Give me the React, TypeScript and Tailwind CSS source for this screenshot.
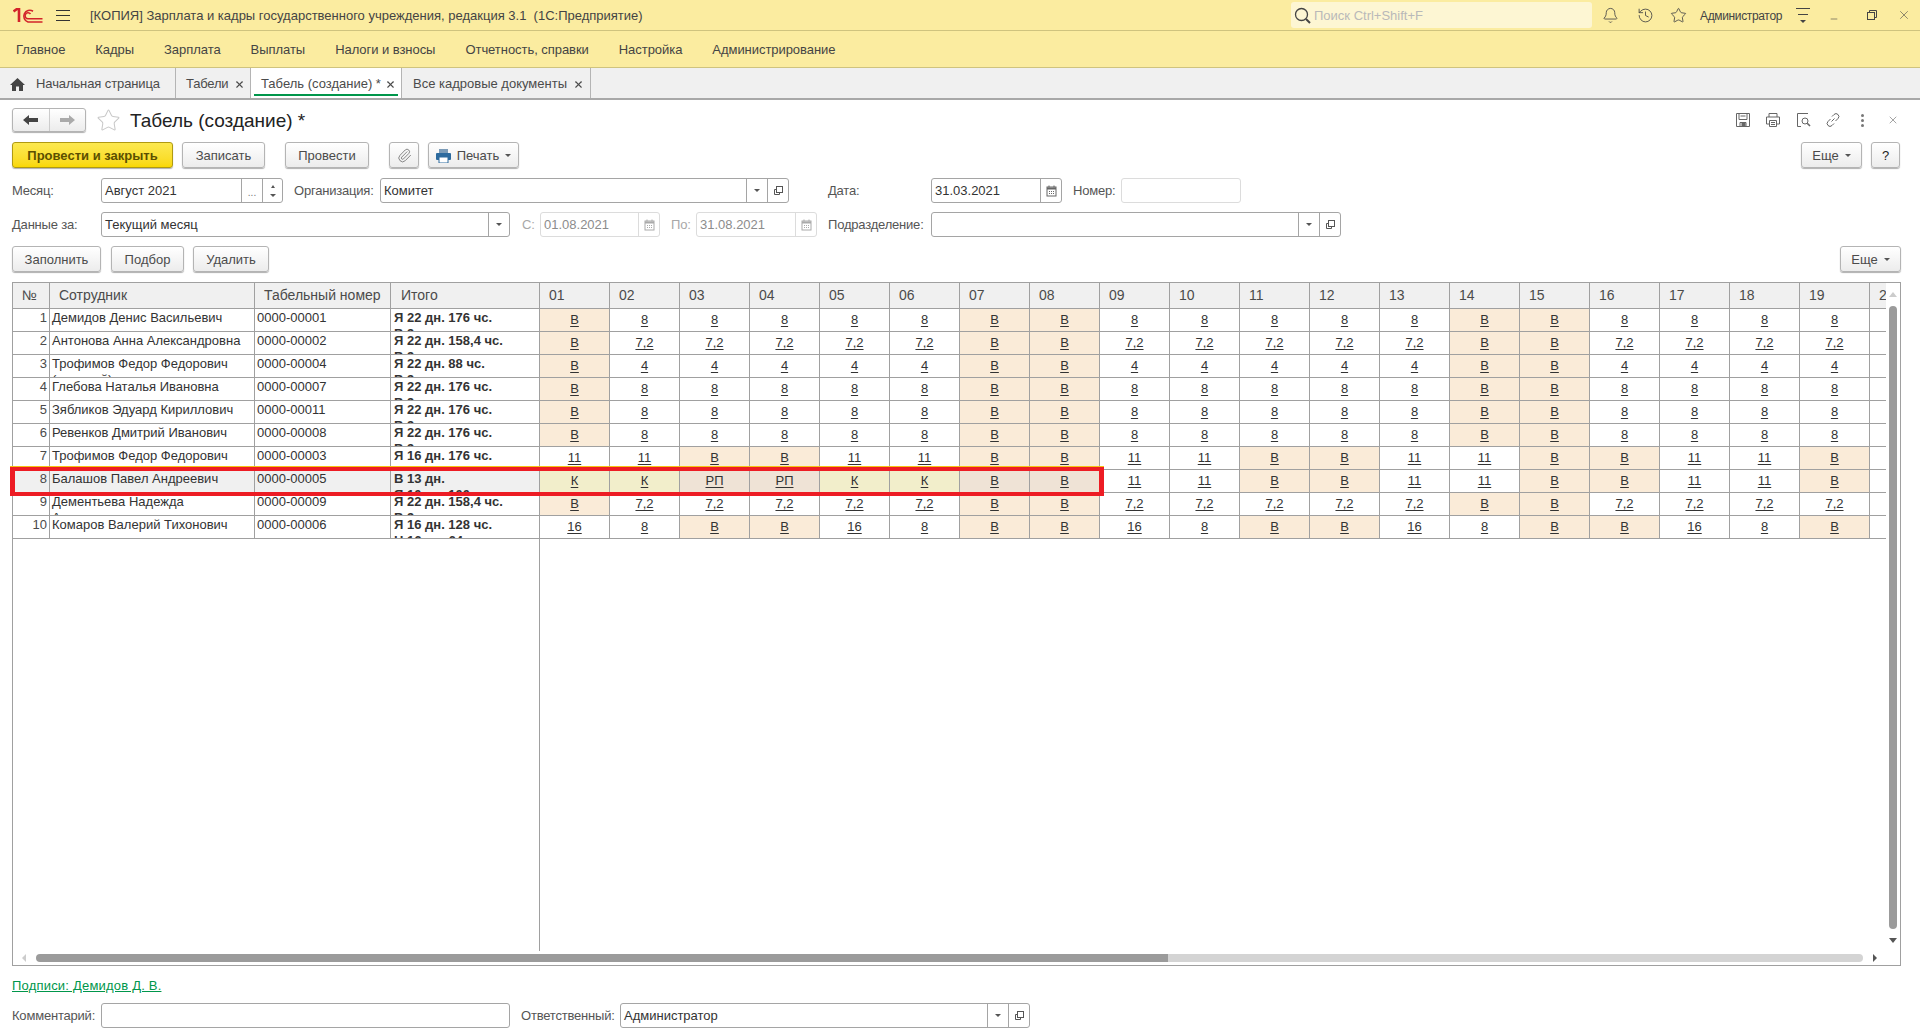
import { Bell, History, Star, X, Paperclip, Minus } from 'lucide-react';
import type { ReactNode } from 'react';

const menuItems = ['Главное', 'Кадры', 'Зарплата', 'Выплаты', 'Налоги и взносы', 'Отчетность, справки', 'Настройка', 'Администрирование'];

const dayHeaders = ['01', '02', '03', '04', '05', '06', '07', '08', '09', '10', '11', '12', '13', '14', '15', '16', '17', '18', '19'];

// 5/2 and 2/2 schedules as they appear in the grid
const fiveTwo = (v: string) => ['В', v, v, v, v, v, v, 'В', 'В', v, v, v, v, v, 'В', 'В', v, v, v, v].filter((_, i) => i !== 1);
const shift = ['11', '11', 'В', 'В', '11', '11', 'В', 'В', '11', '11', 'В', 'В', '11', '11', 'В', 'В', '11', '11', 'В'];

interface Row {
  n: number;
  name: string;
  name2?: string;
  tab: string;
  total: string;
  total2: string;
  days: string[];
  current?: boolean;
}

const rows: Row[] = [
  { n: 1, name: 'Демидов Денис Васильевич', tab: '0000-00001', total: 'Я 22 дн. 176 чс.', total2: 'В 9 дн.', days: fiveTwo('8') },
  { n: 2, name: 'Антонова Анна Александровна', tab: '0000-00002', total: 'Я 22 дн. 158,4 чс.', total2: 'В 9 дн.', days: fiveTwo('7,2') },
  { n: 3, name: 'Трофимов Федор Федорович', name2: '(старший)', tab: '0000-00004', total: 'Я 22 дн. 88 чс.', total2: 'В 9 дн.', days: fiveTwo('4') },
  { n: 4, name: 'Глебова Наталья Ивановна', tab: '0000-00007', total: 'Я 22 дн. 176 чс.', total2: 'В 9 дн.', days: fiveTwo('8') },
  { n: 5, name: 'Зябликов Эдуард Кириллович', tab: '0000-00011', total: 'Я 22 дн. 176 чс.', total2: 'В 9 дн.', days: fiveTwo('8') },
  { n: 6, name: 'Ревенков Дмитрий Иванович', tab: '0000-00008', total: 'Я 22 дн. 176 чс.', total2: 'В 9 дн.', days: fiveTwo('8') },
  { n: 7, name: 'Трофимов Федор Федорович', tab: '0000-00003', total: 'Я 16 дн. 176 чс.', total2: 'В 15 дн.', days: shift },
  { n: 8, name: 'Балашов Павел Андреевич', tab: '0000-00005', total: 'В 13 дн.', total2: 'Я 10 дн. 100 чс.', days: ['К', 'К', 'РП', 'РП', 'К', 'К', 'В', 'В', '11', '11', 'В', 'В', '11', '11', 'В', 'В', '11', '11', 'В'], current: true },
  { n: 9, name: 'Дементьева Надежда', name2: 'Андреевна', tab: '0000-00009', total: 'Я 22 дн. 158,4 чс.', total2: 'В 9 дн.', days: fiveTwo('7,2') },
  { n: 10, name: 'Комаров Валерий Тихонович', tab: '0000-00006', total: 'Я 16 дн. 128 чс.', total2: 'Н 16 дн. 64 чс.', days: ['16', '8', 'В', 'В', '16', '8', 'В', 'В', '16', '8', 'В', 'В', '16', '8', 'В', 'В', '16', '8', 'В'] },
];

const Btn = ({ children, className = '' }: { children: ReactNode; className?: string }) => (
  <button className={`h-[26px] pt-px flex items-center justify-center rounded-[3px] border border-[#b4b4b4] bg-gradient-to-b from-white to-[#ececec] shadow-[0_1px_1px_#b0b0b0] text-[13px] text-[#4b4b4b] ${className}`}>
    {children}
  </button>
);

const Caret = ({ light = false }: { light?: boolean }) => (
  <span className={`inline-block w-0 h-0 border-x-[3px] border-x-transparent border-t-[3px] ${light ? 'border-t-[#999]' : 'border-t-[#555]'}`} />
);

const OpenIcon = () => (
  <svg width="11" height="11" viewBox="0 0 11 11" fill="none" stroke="#555" strokeWidth="1">
    <rect x="3.5" y="1.5" width="6" height="6" />
    <path d="M3.5 4.5h-2v5h5v-2" />
  </svg>
);

const Calendar = ({ light = false }: { light?: boolean }) => (
  <svg width="11" height="12" viewBox="0 0 11 12" fill="none" stroke={light ? '#aaa' : '#666'}>
    <rect x="1" y="2" width="9" height="9" />
    <path d="M1 3.5h9" strokeWidth="2" />
    <path d="M3 0.5v2M8 0.5v2M3 6.5h1M5 6.5h1M7 6.5h1M3 8.5h1M5 8.5h1M7 8.5h1" />
  </svg>
);

const Part = ({ children, w = 21 }: { children: ReactNode; w?: number }) => (
  <span className={`flex h-full items-center justify-center border-l border-inherit shrink-0 ${w === 21 ? 'w-[21px]' : 'w-[20px]'}`}>{children}</span>
);

const Input = ({ w, value, disabled = false, children, h = 'h-[25px]' }: { w: string; value?: string; disabled?: boolean; children?: ReactNode; h?: string }) => (
  <div className={`${w} ${h} shrink-0 flex items-center rounded-[3px] border ${disabled ? 'border-[#dcdcdc] text-[#8c8c8c]' : 'border-[#a5a5a5] text-[#333]'} bg-white text-[13px]`}>
    <span className="flex-1 pl-[3px] overflow-hidden whitespace-nowrap">{value}</span>
    {children}
  </div>
);

const Label = ({ w, ml = '', children, muted = false }: { w: string; ml?: string; children: ReactNode; muted?: boolean }) => (
  <span className={`${w} ${ml} shrink-0 text-[13px] tracking-[-0.2px] whitespace-nowrap ${muted ? 'text-[#a8a8a8]' : 'text-[#555]'}`}>{children}</span>
);

const DayCell = ({ value, current, index }: { value: string; current?: boolean; index: number }) => {
  const off = value === 'В' || value === 'РП';
  let bg = off ? 'bg-[#faebd8]' : 'bg-white';
  if (current && index < 8) bg = off ? 'bg-[#efe3d6]' : 'bg-[#f2eecb]';
  return (
    <div className={`w-[70px] shrink-0 h-full border-r border-[#a0a0a0] text-center pt-[3px] leading-[16px] text-[13px] text-[#333] ${bg}`}>
      <span className="underline underline-offset-2">{value}</span>
    </div>
  );
};

const Table = () => (
  <div className="relative h-[684px] ml-3 mr-[19px] mt-[10px] border border-[#a0a0a0] flex flex-col">
    <div className="flex-1 flex min-h-0">
      <div className="flex-1 min-w-0 overflow-hidden flex flex-col">
        <div className="flex h-[26px] shrink-0 bg-[#f0f0f0] border-b border-[#a0a0a0] text-[14px] text-[#4b4b4b] leading-[25px]">
          <div className="w-[37px] shrink-0 border-r border-[#a0a0a0] pl-[9px]">№</div>
          <div className="w-[205px] shrink-0 border-r border-[#a0a0a0] pl-[9px]">Сотрудник</div>
          <div className="w-[136px] shrink-0 border-r border-[#a0a0a0] pl-[9px] whitespace-nowrap">Табельный номер</div>
          <div className="w-[149px] shrink-0 border-r border-[#a0a0a0] pl-[10px]">Итого</div>
          {dayHeaders.map((d) => (
            <div key={d} className="w-[70px] shrink-0 border-r border-[#a0a0a0] pl-[9px]">{d}</div>
          ))}
          <div className="w-[70px] shrink-0 pl-[9px]">20</div>
        </div>
        {rows.map((r) => (
          <div key={r.n} className="flex h-[23px] shrink-0 border-b border-[#a0a0a0] overflow-hidden bg-white">
            <div className={`w-[37px] shrink-0 h-full border-r border-[#a0a0a0] text-right pr-[2px] pt-px leading-[16px] text-[13px] text-[#4b4b4b] ${r.current ? 'bg-[#f0f0f0]' : ''}`}>{r.n}</div>
            <div className={`w-[205px] shrink-0 h-full border-r border-[#a0a0a0] pl-[2px] pt-px leading-[16px] text-[13px] text-[#333] whitespace-nowrap ${r.current ? 'bg-[#f0f0f0]' : ''}`}>
              <div>{r.name}</div>
              {r.name2 && <div>{r.name2}</div>}
            </div>
            <div className={`w-[136px] shrink-0 h-full border-r border-[#a0a0a0] pl-[2px] pt-px leading-[16px] text-[13px] text-[#333] ${r.current ? 'bg-[#f0f0f0]' : ''}`}>{r.tab}</div>
            <div className={`w-[149px] shrink-0 h-full border-r border-[#a0a0a0] pl-[3px] pt-px leading-[16px] text-[13px] font-bold text-[#333] whitespace-nowrap ${r.current ? 'bg-[#f0f0f0]' : ''}`}>
              <div>{r.total}</div>
              <div>{r.total2}</div>
            </div>
            {r.days.map((d, i) => (
              <DayCell key={i} value={d} current={r.current} index={i} />
            ))}
            <div className="w-[70px] shrink-0 h-full" />
          </div>
        ))}
        <div className="flex-1 flex">
          <div className="w-[527px] shrink-0 border-r border-[#a0a0a0]" />
        </div>
      </div>
      {/* vertical scrollbar */}
      <div className="w-[14px] shrink-0 flex flex-col items-center">
        <div className="h-[23px] shrink-0 flex items-center">
          <span className="w-0 h-0 border-x-[4px] border-x-transparent border-b-[5px] border-b-[#ccc]" />
        </div>
        <div className="flex-1 w-[8px] rounded-full bg-[#9b9b9b]" />
        <div className="h-[22px] shrink-0 flex items-center">
          <span className="w-0 h-0 border-x-[4px] border-x-transparent border-t-[5px] border-t-[#555]" />
        </div>
      </div>
    </div>
    {/* horizontal scrollbar */}
    <div className="h-[14px] shrink-0 flex items-center">
      <span className="ml-[9px] mr-[10px] w-0 h-0 border-y-[4px] border-y-transparent border-r-[4px] border-r-[#ccc]" />
      <div className="h-[8px] w-[1132px] rounded-l-full bg-[#9b9b9b]" />
      <div className="h-[8px] w-[695px] rounded-r-full bg-[#d4d4d4]" />
      <span className="ml-[10px] w-0 h-0 border-y-[4px] border-y-transparent border-l-[4px] border-l-[#555]" />
    </div>
    {/* red marker drawn over the current row */}
    <div className="absolute left-[-3px] top-[184px] w-[1094px] h-[29px] border-x-[5px] border-y-[4px] border-[#ed1c24] shadow-[0_-1px_0_#f5c211]" />
  </div>
);

export default function App() {
  return (
    <div className="h-[1035px] w-[1920px] overflow-hidden bg-white flex flex-col font-['Liberation_Sans',Arial,sans-serif] text-[13px] text-[#4b4b4b]">
      {/* title bar */}
      <header className="h-[31px] shrink-0 bg-[#fbeca0] border-b border-[#cfc37e] flex items-center">
        <svg className="ml-[13px] shrink-0" width="30" height="15" viewBox="0 0 30 15" fill="none" stroke="#d2232a">
          <path d="M0.5 3.5 L4 1 L6 1 L6 14" strokeWidth="2.6" />
          <path d="M20 3.2 A6 6 0 1 0 15 14 H29.5" strokeWidth="1.6" />
          <path d="M17.5 6 A3 3 0 1 0 15 10.8 H29.5" strokeWidth="1.6" />
        </svg>
        <div className="ml-[13px] w-[14px] h-[11px] flex flex-col justify-between shrink-0">
          <span className="h-px bg-[#333]" />
          <span className="h-px bg-[#333]" />
          <span className="h-px bg-[#333]" />
        </div>
        <span className="ml-[20px] pt-[2px] whitespace-pre text-[#444]">[КОПИЯ] Зарплата и кадры государственного учреждения, редакция 3.1  (1С:Предприятие)</span>
        <div className="ml-auto w-[301px] h-[26px] rounded-[3px] bg-[#fdf6d3] flex items-center shrink-0">
          <svg className="ml-[3px]" width="17" height="17" viewBox="0 0 17 17" fill="none" stroke="#444" strokeWidth="1.3">
            <circle cx="7.5" cy="7.5" r="6" />
            <path d="M12 12l4 4" strokeWidth="2" />
          </svg>
          <span className="ml-[3px] pt-[2px] text-[#b9b9b9]">Поиск Ctrl+Shift+F</span>
        </div>
        <Bell className="ml-[10px] shrink-0 text-[#444]" size={17} strokeWidth={1.2} />
        <History className="ml-[18px] shrink-0 text-[#444]" size={17} strokeWidth={1.2} />
        <Star className="ml-[16px] shrink-0 text-[#444]" size={17} strokeWidth={1.2} />
        <span className="ml-[13px] pt-[2px] w-[89px] shrink-0 text-[12px] tracking-[-0.35px] text-[#444] whitespace-nowrap">Администратор</span>
        <div className="ml-[7px] w-[14px] shrink-0 flex flex-col items-center gap-[5px]">
          <span className="h-px w-[14px] bg-[#444]" />
          <span className="h-px w-[10px] bg-[#444]" />
          <span className="w-0 h-0 border-x-[3px] border-x-transparent border-t-[3px] border-t-[#444]" />
        </div>
        <Minus className="ml-[19px] mt-[8px] shrink-0 text-[#444]" size={10} strokeWidth={1.4} />
        <svg className="ml-[28px] shrink-0" width="10" height="10" viewBox="0 0 10 10" fill="none" stroke="#444">
          <rect x="0.5" y="2.5" width="7" height="7" />
          <path d="M2.5 2.5v-2h7v7h-2" />
        </svg>
        <X className="ml-[20px] mr-[9px] shrink-0 text-[#444]" size={14} strokeWidth={1} />
      </header>

      {/* section menu */}
      <nav className="h-[37px] pt-[2px] shrink-0 bg-[#fbeca0] border-b border-[#cfc37e] flex items-center pl-[16px] gap-[30px] tracking-[-0.05px] text-[#444]">
        {menuItems.map((m) => (
          <span key={m}>{m}</span>
        ))}
      </nav>

      {/* open windows */}
      <div className="h-[32px] shrink-0 bg-[#f0f0f0] border-b-2 border-[#a8a8a8] flex">
        <div className="w-[176px] pt-[2px] border-r border-[#b4b4b4] flex items-center pl-[10px]">
          <svg width="15" height="13" viewBox="0 0 15 13" fill="#444">
            <path d="M7.5 0 L15 7 H13 V13 H9 V8.5 H6 V13 H2 V7 H0 Z" />
          </svg>
          <span className="ml-[11px] tracking-[-0.1px]">Начальная страница</span>
        </div>
        <div className="w-[75px] pt-[2px] border-r border-[#b4b4b4] flex items-center pl-[10px]">
          <span className="tracking-[-0.2px]">Табели</span>
          <X className="ml-[6px]" size={11} strokeWidth={2.4} />
        </div>
        <div className="relative w-[151px] pt-[2px] border-r border-[#b4b4b4] bg-white flex items-center pl-[10px]">
          <span className="whitespace-nowrap">Табель (создание) *</span>
          <X className="ml-[4px] shrink-0" size={11} strokeWidth={2.4} />
          <span className="absolute left-[3px] right-[3px] bottom-[2px] h-[2px] bg-[#00964b]" />
        </div>
        <div className="w-[189px] pt-[2px] border-r border-[#b4b4b4] flex items-center pl-[11px]">
          <span className="whitespace-nowrap">Все кадровые документы</span>
          <X className="ml-[6px] shrink-0" size={11} strokeWidth={2.4} />
        </div>
      </div>

      {/* form title */}
      <div className="h-[24px] mt-2 shrink-0 flex items-center pl-3 pr-[21px]">
        <div className="w-[74px] h-[24px] flex rounded-[3px] border border-[#b4b4b4] bg-gradient-to-b from-white to-[#ececec] shadow-[0_1px_1px_#b0b0b0]">
          <span className="flex-1 flex items-center justify-center border-r border-[#ccc]">
            <svg width="15" height="10" viewBox="0 0 15 10" fill="#444"><path d="M0 5 L6 0 V3 H15 V7 H6 V10 Z" /></svg>
          </span>
          <span className="flex-1 flex items-center justify-center">
            <svg width="15" height="10" viewBox="0 0 15 10" fill="#aaa"><path d="M15 5 L9 0 V3 H0 V7 H9 V10 Z" /></svg>
          </span>
        </div>
        <Star className="ml-[10px] text-[#c8c8c8]" size={25} strokeWidth={1} />
        <span className="ml-[9px] pt-[2px] text-[19px] text-[#222] whitespace-nowrap">Табель (создание) *</span>
        <div className="ml-auto flex items-center text-[#666]">
          <svg width="16" height="16" viewBox="0 0 16 16" fill="none" stroke="#666">
            <path d="M1.5 1.5h13v13h-13z" />
            <path d="M4 1.500v6h8v-6M5.500 4h5M5 14.500v-4h6v4" />
            <rect x="7" y="11.500" width="3" height="3" fill="#666" />
          </svg>
          <svg className="ml-[14px]" width="16" height="16" viewBox="0 0 16 16" fill="none" stroke="#666">
            <path d="M4 5V1.500h8V5M4 12H1.500V5h13v7H12" />
            <path d="M4.500 8.500h7v6h-7zM6 10.500h4M6 12.500h4" />
          </svg>
          <svg className="ml-[14px]" width="16" height="16" viewBox="0 0 16 16" fill="none" stroke="#666">
            <path d="M13 1.500H2.500v13H6" />
            <circle cx="10" cy="9" r="3" />
            <path d="M12.200 11.200l2.800 2.800" strokeWidth="1.600" />
          </svg>
          <svg className="ml-[14px]" width="16" height="16" viewBox="0 0 16 16" fill="none" stroke="#666">
            <path d="M6.500 9.500l3-3M7 4.500l2-2a2.800 2.800 0 0 1 4 4l-2.500 2.500M9 11.500l-2 2a2.800 2.800 0 0 1-4-4l2.500-2.500" />
          </svg>
          <span className="ml-[20px] flex flex-col gap-[2px]">
            <span className="w-[3px] h-[3px] bg-[#777] rounded-full" />
            <span className="w-[3px] h-[3px] bg-[#777] rounded-full" />
            <span className="w-[3px] h-[3px] bg-[#777] rounded-full" />
          </span>
          <X className="ml-[23px]" size={12} strokeWidth={1.2} />
        </div>
      </div>

      {/* command bar */}
      <div className="mt-[10px] shrink-0 flex items-center pl-3 pr-[20px]">
        <button className="w-[161px] h-[26px] pt-px rounded-[3px] border border-[#b09a12] bg-gradient-to-b from-[#fce94f] to-[#f9d800] shadow-[0_1px_1px_#b0b0b0] text-[13px] font-bold text-[#5c4f00]">
          Провести и закрыть
        </button>
        <Btn className="ml-[9px] w-[83px]">Записать</Btn>
        <Btn className="ml-[20px] w-[84px]">Провести</Btn>
        <Btn className="ml-[20px] w-[30px]">
          <Paperclip size={15} strokeWidth={1.4} className="text-[#777]" />
        </Btn>
        <Btn className="ml-[9px] w-[91px] gap-[6px]">
          <svg width="15" height="14" viewBox="0 0 15 14">
            <rect x="3" y="0" width="9" height="4" fill="#7c9cb8" />
            <rect x="0" y="4" width="15" height="7" rx="1" fill="#2c6a9e" />
            <rect x="3" y="8" width="9" height="6" fill="#fff" stroke="#2c6a9e" />
          </svg>
          Печать
          <Caret />
        </Btn>
        <Btn className="ml-auto w-[61px] gap-[6px]">
          Еще
          <Caret />
        </Btn>
        <Btn className="ml-[9px] w-[29px] text-[#222]">?</Btn>
      </div>

      {/* header fields */}
      <div className="mt-[10px] shrink-0 flex items-center pl-3">
        <Label w="w-[89px]">Месяц:</Label>
        <Input w="w-[182px]" value="Август 2021">
          <Part><span className="text-[10px] leading-none text-[#777] mt-[4px]">...</span></Part>
          <span className="w-[20px] h-full border-l border-inherit flex flex-col items-center justify-center gap-[6px]">
            <span className="w-0 h-0 border-x-[2px] border-x-transparent border-b-[3px] border-b-[#555]" />
            <Caret />
          </span>
        </Input>
        <Label w="w-[86px]" ml="ml-[11px]">Организация:</Label>
        <Input w="w-[409px]" value="Комитет">
          <Part><Caret /></Part>
          <Part><OpenIcon /></Part>
        </Input>
        <Label w="w-[103px]" ml="ml-[39px]">Дата:</Label>
        <Input w="w-[131px]" value="31.03.2021">
          <Part><Calendar /></Part>
        </Input>
        <Label w="w-[48px]" ml="ml-[11px]">Номер:</Label>
        <Input w="w-[120px]" disabled />
      </div>
      <div className="mt-[9px] shrink-0 flex items-center pl-3">
        <Label w="w-[89px]">Данные за:</Label>
        <Input w="w-[409px]" value="Текущий месяц">
          <Part><Caret /></Part>
        </Input>
        <Label w="w-[18px]" ml="ml-[12px]" muted>С:</Label>
        <Input w="w-[120px]" value="01.08.2021" disabled>
          <Part><Calendar light /></Part>
        </Input>
        <Label w="w-[25px]" ml="ml-[11px]" muted>По:</Label>
        <Input w="w-[121px]" value="31.08.2021" disabled>
          <Part><Calendar light /></Part>
        </Input>
        <Label w="w-[103px]" ml="ml-[11px]">Подразделение:</Label>
        <Input w="w-[410px]">
          <Part><Caret /></Part>
          <Part><OpenIcon /></Part>
        </Input>
      </div>

      {/* grid commands */}
      <div className="mt-[9px] shrink-0 flex items-center pl-3 pr-[19px]">
        <Btn className="w-[89px]">Заполнить</Btn>
        <Btn className="ml-[10px] w-[73px]">Подбор</Btn>
        <Btn className="ml-[9px] w-[76px]">Удалить</Btn>
        <Btn className="ml-auto w-[61px] gap-[6px]">
          Еще
          <Caret />
        </Btn>
      </div>

      <Table />

      {/* footer */}
      <div className="mt-[12px] pl-3 shrink-0 leading-[16px]">
        <span className="text-[13px] tracking-[0.2px] text-[#00964b] underline">Подписи: Демидов Д. В.</span>
      </div>
      <div className="mt-[9px] shrink-0 flex items-center pl-3">
        <Label w="w-[89px]">Комментарий:</Label>
        <Input w="w-[409px]" />
        <Label w="w-[99px]" ml="ml-[11px]">Ответственный:</Label>
        <Input w="w-[410px]" value="Администратор">
          <Part><Caret /></Part>
          <Part><OpenIcon /></Part>
        </Input>
      </div>
    </div>
  );
}
